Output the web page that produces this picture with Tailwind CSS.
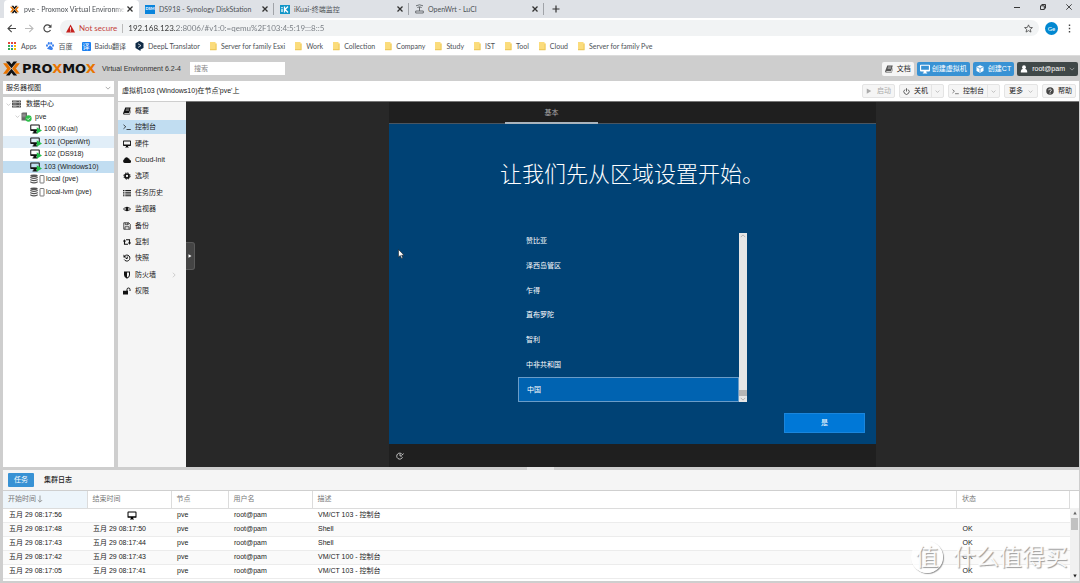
<!DOCTYPE html>
<html lang="zh-CN">
<head>
<meta charset="utf-8">
<title>pve - Proxmox Virtual Environment</title>
<script src="https://cdn.jsdelivr.net/npm/@tailwindcss/browser@4"></script>
</head>
<body class="h-screen overflow-hidden flex flex-col bg-[#cecece] text-[7px] leading-[10px] text-[#222] font-['Liberation_Sans','Noto_Sans_CJK_SC',sans-serif]">

<svg class="hidden" aria-hidden="true">
  <symbol id="close" viewBox="0 0 8 8"><path d="M1.500 1.500l5 5M6.500 1.500l-5 5" stroke="currentColor" stroke-width="1.300" fill="none"/></symbol>
  <symbol id="chev" viewBox="0 0 8 8"><path d="M1 2.500l3 3 3-3" stroke="currentColor" stroke-width="0.900" fill="none"/></symbol>
  <symbol id="px" viewBox="0 0 18 16"><path d="M0 2.500h4L8.300 8 4 13.500H0L4.300 8zM18 2.500h-4L9.700 8l4.300 5.500h4L13.700 8z" fill="#e87400"/><path d="M3 .5h3.800L9 3.500l2.200-3H15L9 7.800zM3 15.500h3.800L9 12.500l2.200 3H15L9 8.200z" fill="#111"/></symbol>
  <symbol id="folder" viewBox="0 0 8 10"><path d="M1 1h5.500v1.500H7.500V9H1z" fill="#fbdc7c"/><path d="M1 8h5.500V2.500h1V9.300H1z" fill="#eec95c"/></symbol>
  <symbol id="monitor" viewBox="0 0 16 16"><path d="M1.500 1h13A1.500 1.500 0 0116 2.500v8A1.500 1.500 0 0114.500 12H10v1.500l1.500.5v1h-7v-1l1.500-.5V12H1.500A1.500 1.500 0 010 10.500v-8A1.500 1.500 0 011.500 1zm.3 1.800v6.400h12.400V2.800z" fill="currentColor" fill-rule="evenodd"/></symbol>
  <symbol id="vm" viewBox="0 0 24 20"><path d="M2 1h16a1.500 1.500 0 011.500 1.500v10A1.500 1.500 0 0118 14h-5v2.500l2 1V19H5v-1.500l2-1V14H2a1.500 1.500 0 01-1.500-1.500v-10A1.500 1.500 0 012 1zm.5 2v7.500h15V3z" fill="#111" fill-rule="evenodd"/><path d="M13.500 6.500L24 13l-10.500 6.500z" fill="#22c04a"/></symbol>
  <symbol id="storage" viewBox="0 0 30 20"><g fill="#555"><ellipse cx="8" cy="3.500" rx="7.500" ry="2.700"/><path d="M.5 5.500q7.500 3.500 15 0v2.700q-7.500 3.500-15 0zM.5 10q7.500 3.500 15 0v2.700q-7.500 3.500-15 0zM.5 14.500q7.500 3.500 15 0v2.700q-7.500 3.500-15 0z"/></g><rect x="20" y="3" width="8" height="15" rx="1" fill="#fff" stroke="#444" stroke-width="1.400"/></symbol>
  <symbol id="server" viewBox="0 0 18 16"><path d="M0 1h18v4H0zM0 6h18v4H0zM0 11h18v4H0z" fill="#555"/><path d="M2 3h7M2 8h7M2 13h7" stroke="#ccc"/><path d="M14 2.300h2v1.400h-2zM14 7.300h2v1.400h-2zM14 12.300h2v1.400h-2z" fill="#eee"/></symbol>
  <symbol id="node" viewBox="0 0 22 20"><path d="M1 2l3-1h8v16H1z" fill="#666"/><path d="M2.500 4.500h7M2.500 7h7M2.500 9.500h7" stroke="#bbb"/><circle cx="15" cy="13" r="6.300" fill="#2fbf4b"/><path d="M12 13l2.300 2.300L18 11.300" stroke="#fff" stroke-width="1.800" fill="none"/></symbol>
  <symbol id="book" viewBox="0 0 16 16"><path d="M4.500 1H15.500L12.500 12H3a.8.8 0 000 1.500h10.500l2-7.500.5 1-2.300 8H2.500C.8 15-.2 13.500.4 12z" fill="currentColor"/><path d="M6 4h6.500M5.300 6.500h6.500" stroke="#fff" stroke-width="1"/></symbol>
  <symbol id="term" viewBox="0 0 16 16"><path d="M1 3.500l4.500 4L1 11.500M7 13h8.500" stroke="currentColor" stroke-width="1.500" fill="none"/></symbol>
  <symbol id="cloud" viewBox="0 0 16 16"><path d="M4 14a4 4 0 01-1.500-7.600A4.500 4.500 0 0110.500 4.500a3.500 3.500 0 013 3.500A3 3 0 0113 14z" fill="currentColor"/></symbol>
  <symbol id="gear" viewBox="0 0 16 16"><circle cx="8" cy="8" r="4" stroke="currentColor" stroke-width="3.400" fill="none"/><circle cx="8" cy="8" r="6.300" stroke="currentColor" stroke-width="2" stroke-dasharray="2.700 2.250" fill="none"/></symbol>
  <symbol id="list" viewBox="0 0 16 16"><path d="M0 3h3M4.500 3H16M0 6.500h3M4.500 6.500H16M0 10h3M4.500 10H16M0 13.500h3M4.500 13.500H16" stroke="currentColor" stroke-width="1.900"/></symbol>
  <symbol id="eye" viewBox="0 0 16 16"><path d="M0 8q8-9 16 0-8 9-16 0zm2 0q2 2.500 4 3-2-3 0-6-2 .7-4 3zm12 0q-2-2.300-4-3 2 3 0 6 2-.5 4-3z" fill="currentColor" fill-rule="evenodd"/></symbol>
  <symbol id="save" viewBox="0 0 16 16"><path d="M1.500 1.500h10l3 3v10h-13zM4.500 1.500v4h6v-4M4 14.500v-5h8v5M8.500 2v3" stroke="currentColor" stroke-width="1.400" fill="none"/></symbol>
  <symbol id="retweet" viewBox="0 0 16 16"><path d="M6 3.500h7v7M10 12.500H3v-7" stroke="currentColor" stroke-width="2.200" fill="none"/><path d="M9.800 9h6.400L13 13.500zM-.2 7h6.400L3 2.500z" fill="currentColor"/></symbol>
  <symbol id="history" viewBox="0 0 16 16"><path d="M3 4.500a6 6 0 11-.5 6.500M8.500 5v4H5.500" stroke="currentColor" stroke-width="2" fill="none"/><path d="M1 1v6h6z" fill="currentColor"/></symbol>
  <symbol id="shield" viewBox="0 0 16 16"><path d="M2 1h12v7q0 5-6 7.500Q2 13 2 8zm6 2v10q4-2 4-5V3z" fill="currentColor" fill-rule="evenodd"/></symbol>
  <symbol id="unlock" viewBox="0 0 16 16"><path d="M0 7.500h10V15H0z" fill="currentColor"/><path d="M8 8V5a3 3 0 016 0v3" stroke="currentColor" stroke-width="2" fill="none"/></symbol>
  <symbol id="cube" viewBox="0 0 16 16"><path d="M8 .5l7 3v8.500l-7 3.500-7-3.500V3.500z" fill="#fff"/><path d="M2.500 4.500L8 7l5.500-2.500M8 7v7" stroke="#3892d4" stroke-width="1.500" fill="none"/></symbol>
  <symbol id="user" viewBox="0 0 16 16"><circle cx="8" cy="4.500" r="3.800" fill="#fff"/><path d="M1.500 15q0-7 4-7h5q4 0 4 7z" fill="#fff"/></symbol>
  <symbol id="power" viewBox="0 0 16 16"><path d="M4.500 3.500a6 6 0 107 0M8 .5V8" stroke="currentColor" stroke-width="1.900" fill="none"/></symbol>
  <symbol id="play" viewBox="0 0 16 16"><path d="M2 1l12 7-12 7z" fill="currentColor"/></symbol>
  <symbol id="help" viewBox="0 0 16 16"><circle cx="8" cy="8" r="7.500" fill="currentColor"/><path d="M5.500 6.500a2.500 2.500 0 114 2Q8 9.200 8 10.500M8 11.500v1.800" stroke="#fff" stroke-width="1.800" fill="none"/></symbol>
</svg>

<!-- Browser tab strip -->
<header class="shrink-0 font-[Lato,'Noto_Sans_CJK_SC',sans-serif] text-[#4d5156]">
  <div class="flex h-[18px] items-stretch bg-[#dee1e6] pl-1">
    <div class="flex w-[135px] items-center rounded-t bg-white pl-[6px] pr-[5px]">
      <svg class="mr-[5px] size-[9px] shrink-0"><use href="#px"/></svg>
      <span class="flex-1 overflow-hidden whitespace-nowrap mask-r-from-90%">pve - Proxmox Virtual Environment</span>
      <button class="ml-px" aria-label="关闭标签页"><svg class="size-2 text-[#333]"><use href="#close"/></svg></button>
    </div>
    <div class="my-[3px] flex w-[135px] items-center border-r border-[#a0a3a8] pl-[6px] pr-1">
      <span class="mr-1 flex h-[9px] w-[10px] shrink-0 items-center justify-center bg-[#0a84dc] text-[4px] font-bold text-white">DSM</span>
      <span class="flex-1 whitespace-nowrap">DS918 - Synology DiskStation</span>
      <button aria-label="关闭标签页"><svg class="size-2 text-[#333]"><use href="#close"/></svg></button>
    </div>
    <div class="my-[3px] flex w-[135px] items-center border-r border-[#a0a3a8] pl-[6px] pr-1">
      <svg class="mr-1 h-[9px] w-[10px] shrink-0" viewBox="0 0 10 9"><path d="M0 0h10v9H0z" fill="#1296c8"/><path d="M2 2v1M2 3.700V7M4.500 1.500V7.500M8 1.500L5 4.500l3 3" stroke="#fff" stroke-width="1.300" fill="none"/></svg>
      <span class="flex-1 whitespace-nowrap">iKuai-终端监控</span>
      <button aria-label="关闭标签页"><svg class="size-2 text-[#333]"><use href="#close"/></svg></button>
    </div>
    <div class="my-[3px] flex w-[135px] items-center border-r border-[#a0a3a8] pl-[6px] pr-1">
      <svg class="mr-1 h-[10px] w-[9px] shrink-0" viewBox="0 0 9 10"><path d="M4.500 3v4M1 1.800q3.500-2 7 0M2.300 3.500q2.200-1.300 4.400 0M.7 7h7.600v2H.7z" stroke="#5f6368" stroke-width=".9" fill="none"/></svg>
      <span class="flex-1 whitespace-nowrap">OpenWrt - LuCI</span>
      <button aria-label="关闭标签页"><svg class="size-2 text-[#333]"><use href="#close"/></svg></button>
    </div>
    <button class="ml-2" aria-label="新标签页"><svg class="size-2" viewBox="0 0 8 8"><path d="M4 .5v7M.5 4h7" stroke="#333" stroke-width="1.200"/></svg></button>
    <div class="ml-auto flex items-center gap-5 pr-2 pb-1 text-[#222]">
      <button aria-label="最小化"><svg class="size-[6px]" viewBox="0 0 6 6"><path d="M0 3.500h6" stroke="currentColor" stroke-width=".9"/></svg></button>
      <button aria-label="还原"><svg class="size-[6px]" viewBox="0 0 6 6"><path d="M.5 1.800h3.800v3.700H.5zM1.800 1.500V.5h3.700v3.700h-1" stroke="currentColor" stroke-width=".9" fill="none"/></svg></button>
      <button aria-label="关闭"><svg class="size-[6px]" viewBox="0 0 6 6"><path d="M.3.300l5.400 5.400M5.700.3L.3 5.700" stroke="currentColor" stroke-width=".8"/></svg></button>
    </div>
  </div>

  <div class="flex h-5 items-center bg-white pl-[7px] pr-[9px]">
    <button class="mr-[9px]" aria-label="后退"><svg class="size-[9px]" viewBox="0 0 9 9"><path d="M9 4.500H1M4.700.8L1 4.500l3.700 3.700" stroke="#444" stroke-width="1.100" fill="none"/></svg></button>
    <button class="mr-[9px]" aria-label="前进"><svg class="size-[9px]" viewBox="0 0 9 9"><path d="M0 4.500h8M4.300.8L8 4.500 4.300 8.200" stroke="#bbb" stroke-width="1.100" fill="none"/></svg></button>
    <button class="mr-2" aria-label="重新加载"><svg class="size-[9px]" viewBox="0 0 9 9"><path d="M7.500 6A3.500 3.500 0 117 2" stroke="#444" stroke-width="1.200" fill="none"/><path d="M8.500.3v3.400H5.100z" fill="#444"/></svg></button>
    <div class="flex h-4 flex-1 items-center rounded-full bg-[#f1f3f4] px-[6px] text-[8px]">
      <svg class="mr-1 size-[9px]" viewBox="0 0 9 9"><path d="M4.500.5L9 8.500H0z" fill="#c5221f"/><path d="M4.500 3.200v2.600M4.500 6.500v1" stroke="#fff" stroke-width=".9"/></svg>
      <span class="text-[#c5423a]">Not secure</span>
      <span class="mx-[5px] h-[9px] w-px bg-[#bbb]"></span>
      <input aria-label="地址" class="min-w-0 flex-1 bg-[linear-gradient(90deg,#333_49px,#757a80_49px)] bg-clip-text text-transparent outline-none" value="192.168.123.2:8006/#v1:0:=qemu%2F103:4:5:19:::8::5">
      <button aria-label="收藏"><svg class="size-[9px]" viewBox="0 0 16 16"><path d="M8 1.500l2 4.500 5 .4-3.800 3.200 1.200 4.800L8 11.800l-4.400 2.600 1.200-4.800L1 6.400 6 6z" stroke="#444" stroke-width="1.400" fill="none"/></svg></button>
    </div>
    <button class="ml-[6px] size-[13px] rounded-full bg-[#0288d1] text-[6px] leading-[13px] text-white">Ge</button>
    <button class="ml-[10px]" aria-label="菜单"><svg class="h-[9px] w-[3px]" viewBox="0 0 3 9"><path d="M.8.500h1.400v1.500H.8zM.8 3.700h1.400v1.500H.8zM.8 7h1.400v1.500H.8z" fill="#444"/></svg></button>
  </div>

  <nav class="flex h-[18px] items-center gap-[9px] border-b border-[#dcdcdc] bg-white pl-2 pb-px whitespace-nowrap" aria-label="书签">
    <a href="#" class="flex items-center gap-[5px]"><svg class="size-2" viewBox="0 0 8 8"><path d="M0 0h2v2H0zM3 0h2v2H3zM6 0h2v2H6z" fill="#e2453a"/><path d="M0 3h2v2H0z" fill="#34a853"/><path d="M3 3h2v2H3z" fill="#4285f4"/><path d="M6 3h2v2H6z" fill="#f6b704"/><path d="M0 6h2v2H0zM3 6h2v2H3z" fill="#34a853"/><path d="M6 6h2v2H6z" fill="#f6b704"/></svg>Apps</a>
    <a href="#" class="flex items-center gap-[5px]"><svg class="size-2" viewBox="0 0 8 8" fill="#3a80ee"><ellipse cx="1" cy="3.500" rx="1" ry="1.300"/><ellipse cx="2.800" cy="1.400" rx="1" ry="1.300"/><ellipse cx="5.200" cy="1.400" rx="1" ry="1.300"/><ellipse cx="7" cy="3.500" rx="1" ry="1.300"/><path d="M4 3.200q3 2 3 3.600T4 7.700 1 6.800t3-3.600z"/></svg>百度</a>
    <a href="#" class="flex items-center gap-1"><span class="size-[9px] rounded-[1px] bg-[#1a7ff0] text-center leading-[9px] text-white">译</span>Baidu翻译</a>
    <a href="#" class="flex items-center gap-1"><svg class="h-[10px] w-[9px]" viewBox="0 0 9 10"><path d="M4.500 0l4 2.300v4.600L5.500 8.500v1.500L.5 6.900V2.300z" fill="#0f2b46"/><path d="M3 2.800l3 1.800-3 1.800" stroke="#fff" stroke-width=".7" fill="none"/></svg>DeepL Translator</a>
    <a href="#" class="flex items-center gap-1"><svg class="h-[10px] w-2"><use href="#folder"/></svg>Server for family Esxi</a>
    <a href="#" class="flex items-center gap-1"><svg class="h-[10px] w-2"><use href="#folder"/></svg>Work</a>
    <a href="#" class="flex items-center gap-1"><svg class="h-[10px] w-2"><use href="#folder"/></svg>Collection</a>
    <a href="#" class="flex items-center gap-1"><svg class="h-[10px] w-2"><use href="#folder"/></svg>Company</a>
    <a href="#" class="flex items-center gap-1"><svg class="h-[10px] w-2"><use href="#folder"/></svg>Study</a>
    <a href="#" class="flex items-center gap-1"><svg class="h-[10px] w-2"><use href="#folder"/></svg>IST</a>
    <a href="#" class="flex items-center gap-1"><svg class="h-[10px] w-2"><use href="#folder"/></svg>Tool</a>
    <a href="#" class="flex items-center gap-1"><svg class="h-[10px] w-2"><use href="#folder"/></svg>Cloud</a>
    <a href="#" class="flex items-center gap-1"><svg class="h-[10px] w-2"><use href="#folder"/></svg>Server for family Pve</a>
  </nav>
</header>

<!-- Proxmox header -->
<div class="flex h-[25px] shrink-0 items-center pl-[3px] pr-[2px]">
  <svg class="h-[15px] w-[17px] shrink-0"><use href="#px"/></svg>
  <span class="ml-[2px] w-[77px] font-['DejaVu_Sans'] text-[13px] leading-4 font-bold text-[#111]">PRO<span class="text-[#e87400]">X</span>MO<span class="text-[#e87400]">X</span></span>
  <span class="ml-[3px] w-[82px] whitespace-nowrap text-[#333]">Virtual Environment 6.2-4</span>
  <input type="search" aria-label="搜索" placeholder="搜索" class="ml-[6px] h-[13px] w-[95px] bg-white px-1 placeholder:text-[#888] outline-none">
  <div class="ml-auto flex h-[14px] gap-[3px]">
    <button class="flex items-center gap-1 rounded-[2px] bg-[#f5f5f5] px-[3px] text-[#222]"><svg class="size-2 text-[#555]"><use href="#book"/></svg>文档</button>
    <button class="flex items-center gap-[2px] rounded-[2px] bg-[#3892d4] px-[3px] text-white"><svg class="size-[10px]"><use href="#monitor"/></svg>创建虚拟机</button>
    <button class="flex items-center gap-1 rounded-[2px] bg-[#3892d4] px-[3px] text-white"><svg class="size-2"><use href="#cube"/></svg>创建CT</button>
    <button class="flex items-center gap-1 rounded-[2px] bg-[#404848] px-[3px] text-white"><svg class="size-2"><use href="#user"/></svg>root@pam<svg class="size-[6px] text-[#bbb]"><use href="#chev"/></svg></button>
  </div>
</div>

<main class="flex min-h-0 flex-1 gap-1 pl-[3px] pr-px">
  <aside class="flex w-[111px] shrink-0 flex-col gap-[3px]">
    <div class="relative h-[13px] bg-white">
      <select aria-label="视图" class="h-full w-full appearance-none px-[3px] outline-none"><option>服务器视图</option></select>
      <svg class="pointer-events-none absolute top-1 right-[3px] size-[6px] text-[#888]"><use href="#chev"/></svg>
    </div>
    <div class="flex-1 bg-white pt-px">
      <ul class="grid h-[100px] grid-rows-8 [&>li]:flex [&>li]:items-center">
        <li class="pl-[3px]"><svg class="size-[5px] text-[#aaa]"><use href="#chev"/></svg><svg class="mr-[5px] ml-px h-2 w-[9px]"><use href="#server"/></svg>数据中心</li>
        <li class="pl-3"><svg class="size-[5px] text-[#aaa]"><use href="#chev"/></svg><svg class="mr-[3px] ml-px h-[10px] w-[11px]"><use href="#node"/></svg>pve</li>
        <li class="gap-[2px] pl-[27px]"><svg class="h-[10px] w-3"><use href="#vm"/></svg>100 (iKuai)</li>
        <li class="gap-[2px] bg-[#e1eef8] pl-[27px]"><svg class="h-[10px] w-3"><use href="#vm"/></svg>101 (OpenWrt)</li>
        <li class="gap-[2px] pl-[27px]"><svg class="h-[10px] w-3"><use href="#vm"/></svg>102 (DS918)</li>
        <li class="gap-[2px] bg-[#c1ddf1] pl-[27px]"><svg class="h-[10px] w-3"><use href="#vm"/></svg>103 (Windows10)</li>
        <li class="gap-px pl-[27px]"><svg class="h-[10px] w-[15px]"><use href="#storage"/></svg>local (pve)</li>
        <li class="gap-px pl-[27px]"><svg class="h-[10px] w-[15px]"><use href="#storage"/></svg>local-lvm (pve)</li>
      </ul>
    </div>
  </aside>

  <section class="flex min-w-0 flex-1 flex-col">
    <div class="flex h-5 shrink-0 items-center bg-white pl-1 pr-[3px]">
      <h1 class="text-[#222]">虚拟机103 (Windows10)在节点'pve'上</h1>
      <div class="ml-auto flex h-[14px] gap-1 text-[#222] [&>*]:rounded-[2px] [&>*]:border [&>*]:border-[#e4e4e4] [&>*]:bg-[#f5f5f5]">
        <button disabled class="flex items-center gap-[5px] px-[3px] text-[#aaa]"><svg class="size-[6px]"><use href="#play"/></svg>启动</button>
        <div class="flex">
          <button class="flex items-center gap-1 border-r border-[#e4e4e4] px-[3px]"><svg class="size-[7px] text-[#444]"><use href="#power"/></svg>关机</button>
          <button class="px-[3px]" aria-label="关机选项"><svg class="size-[5px] text-[#999]"><use href="#chev"/></svg></button>
        </div>
        <div class="flex">
          <button class="flex items-center gap-1 border-r border-[#e4e4e4] px-[3px]"><svg class="size-[7px] text-[#444]"><use href="#term"/></svg>控制台</button>
          <button class="px-[3px]" aria-label="控制台选项"><svg class="size-[5px] text-[#999]"><use href="#chev"/></svg></button>
        </div>
        <button class="flex items-center gap-[5px] px-1">更多<svg class="size-[5px] text-[#999]"><use href="#chev"/></svg></button>
        <button class="flex items-center gap-1 px-[3px]"><svg class="size-2 text-[#444]"><use href="#help"/></svg>帮助</button>
      </div>
    </div>

    <div class="flex min-h-0 flex-1">
      <nav class="w-[68px] shrink-0 border-t border-[#cecece] bg-[#f5f5f5] pt-[2px] text-[#222]">
        <div class="grid h-[194px] grid-rows-12 gap-y-[3px] [&>a]:flex [&>a]:items-center [&>a]:gap-1 [&>a]:pl-[5px] [&>a>svg]:size-2 [&>a>svg]:text-[#111]">
          <a href="#"><svg><use href="#book"/></svg>概要</a>
          <a href="#" class="bg-[#c1ddf1]"><svg><use href="#term"/></svg>控制台</a>
          <a href="#"><svg><use href="#monitor"/></svg>硬件</a>
          <a href="#"><svg><use href="#cloud"/></svg>Cloud-Init</a>
          <a href="#"><svg><use href="#gear"/></svg>选项</a>
          <a href="#"><svg><use href="#list"/></svg>任务历史</a>
          <a href="#"><svg><use href="#eye"/></svg>监视器</a>
          <a href="#"><svg><use href="#save"/></svg>备份</a>
          <a href="#"><svg><use href="#retweet"/></svg>复制</a>
          <a href="#"><svg><use href="#history"/></svg>快照</a>
          <a href="#"><svg><use href="#shield"/></svg>防火墙<span class="ml-auto pr-[9px] text-[#bbb]"><svg class="size-[6px] -rotate-90"><use href="#chev"/></svg></span></a>
          <a href="#"><svg><use href="#unlock"/></svg>权限</a>
        </div>
      </nav>

      <!-- Console: guest screen -->
      <div class="relative flex flex-1 justify-center border-t border-[#777] bg-[#282828]">
        <button class="absolute top-[140px] left-0 flex h-7 w-[9px] items-center justify-center rounded-r-[3px] border border-l-0 border-[#5a5a5a] bg-[#444]" aria-label="展开控制栏"><svg class="size-1 text-white"><use href="#play"/></svg></button>
        <div class="flex w-[487px] flex-col bg-[#1f1f1f] text-white">
          <div class="flex h-[22px] shrink-0 border-b border-[#4a5560] pl-[116px]">
            <span class="-mb-px w-[93px] border-b-2 border-[#aab4bd] text-center leading-[22px] text-[#aaa]">基本</span>
          </div>
          <div class="flex min-h-0 flex-1 flex-col bg-[#004275]">
            <h2 class="pt-[37px] pl-[111px] text-[22px] leading-7 font-light">让我们先从区域设置开始。</h2>
            <div class="mt-10 ml-[129px] flex w-[229px]">
              <ul class="grid h-[173px] flex-1 grid-rows-7 [&>li]:flex [&>li]:items-center [&>li]:pl-2">
                <li>赞比亚</li><li>泽西岛管区</li><li>乍得</li><li>直布罗陀</li><li>智利</li><li>中非共和国</li>
                <li class="border border-[#6a9cc8] bg-[#0063b1]">中国</li>
              </ul>
              <div class="mt-1 flex w-2 flex-col items-center bg-[#e6e6e6] text-[#999]">
                <svg class="size-[6px] rotate-180"><use href="#chev"/></svg>
                <span class="mt-auto h-[6px] w-full bg-[#b5b5b5]"></span>
                <svg class="size-[6px]"><use href="#chev"/></svg>
              </div>
            </div>
            <button class="mt-[11px] mr-[11px] h-5 w-[81px] self-end border border-[#1a86dd] bg-[#0078d7]">是</button>
          </div>
          <div class="flex h-[23px] shrink-0 items-center pl-[7px]">
            <svg class="size-2" viewBox="0 0 16 16"><path d="M12.500 5A6 6 0 1013 10.500M8 4v4h4M15 3l-3 3.500" stroke="#ddd" stroke-width="1.700" fill="none"/></svg>
          </div>
        </div>
        <svg class="absolute top-[147px] left-[212px] h-[10px] w-[7px]" viewBox="0 0 7 10"><path d="M.5.500v7.500L2.300 6.500l1.300 3 1.200-.6-1.200-2.700H6z" fill="#fff" stroke="#111" stroke-width=".5"/></svg>
      </div>
    </div>
  </section>
</main>

<!-- Task log -->
<div class="flex h-[3px] shrink-0 justify-center"><span class="h-[3px] w-[27px] bg-[#e6e6e6]"></span></div>
<section class="mr-px mb-[2px] ml-[3px] flex h-[111px] shrink-0 flex-col overflow-hidden bg-white">
  <div class="flex h-5 shrink-0 items-center gap-1 bg-[#f5f5f5] pl-[5px]" role="tablist">
    <button role="tab" aria-selected="true" class="h-[14px] rounded-[1px] bg-[#3892d4] px-[6px] text-white">任务</button>
    <button role="tab" aria-selected="false" class="h-[14px] px-[6px] font-medium">集群日志</button>
  </div>
  <div class="flex min-h-0 flex-1 border-t border-[#cfcfcf]">
    <table class="w-full flex-1 table-fixed self-start border-collapse text-left [&_td]:h-[14px] [&_td]:border-b [&_td]:border-[#ececec] [&_td]:p-0 [&_td]:pl-[6px] [&_th]:h-[17px] [&_th]:border-r [&_th]:border-b [&_th]:border-[#dcdcdc] [&_th]:p-0 [&_th]:pl-[5px] [&_th]:font-normal [&_th]:text-[#777] [&_tr:nth-child(even)]:bg-[#fafafa]">
      <colgroup><col class="w-[84px]"><col class="w-[84px]"><col class="w-[57px]"><col class="w-[84px]"><col><col class="w-[113px]"></colgroup>
      <thead><tr><th class="bg-[#edf5fb]"><span class="flex items-center">开始时间<svg class="ml-px h-2 w-[6px]" viewBox="0 0 6 8"><path d="M3 .5v6.500M.8 5L3 7.200 5.200 5" stroke="#888" stroke-width=".8" fill="none"/></svg></span></th><th>结束时间</th><th>节点</th><th>用户名</th><th>描述</th><th>状态</th></tr></thead>
      <tbody>
        <tr><td>五月 29 08:17:56</td><td><svg class="mx-auto h-[9px] w-[10px] text-black"><use href="#monitor"/></svg></td><td>pve</td><td>root@pam</td><td>VM/CT 103 - 控制台</td><td></td></tr>
        <tr><td>五月 29 08:17:48</td><td>五月 29 08:17:50</td><td>pve</td><td>root@pam</td><td>Shell</td><td>OK</td></tr>
        <tr><td>五月 29 08:17:43</td><td>五月 29 08:17:44</td><td>pve</td><td>root@pam</td><td>Shell</td><td>OK</td></tr>
        <tr><td>五月 29 08:17:42</td><td>五月 29 08:17:43</td><td>pve</td><td>root@pam</td><td>VM/CT 100 - 控制台</td><td>OK</td></tr>
        <tr><td>五月 29 08:17:05</td><td>五月 29 08:17:41</td><td>pve</td><td>root@pam</td><td>VM/CT 103 - 控制台</td><td>OK</td></tr>
      </tbody>
    </table>
    <div class="mt-[17px] flex w-[9px] flex-col items-center bg-[#f1f1f1] text-[#666]">
      <svg class="my-[3px] size-1 -rotate-90"><use href="#play"/></svg>
      <span class="h-3 w-[7px] bg-[#c1c1c1]"></span>
      <svg class="mt-auto mb-[3px] size-1 rotate-90 text-[#222]"><use href="#play"/></svg>
    </div>
  </div>
</section>

<!-- Watermark -->
<div class="pointer-events-none absolute right-3 bottom-[10px] flex items-center gap-[10px] text-[23px] leading-8 text-white/90 [text-shadow:1px_1px_1px_#999]">
  <span class="size-8 rounded-full border border-white bg-white/70 text-center leading-[30px] shadow-[1px_1px_1px_#999]">值</span>
  <span>什么值得买</span>
</div>
</body>
</html>
